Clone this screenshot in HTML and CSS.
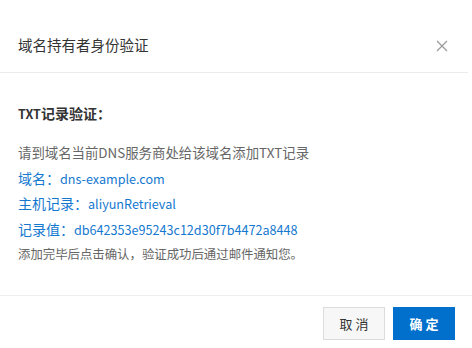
FILE: index.html
```html
<!DOCTYPE html>
<html lang="zh-CN">
<head>
<meta charset="utf-8">
<link rel="stylesheet" href="styles.css">
</head>
<body>
<div class="dialog">
  <div class="header">
    <span class="title">域名持有者身份验证</span>
    <svg class="close" width="12" height="12" viewBox="0 0 12 12"><path d="M1 1L11 11M11 1L1 11" stroke="#999" stroke-width="1.2" fill="none"/></svg>
  </div>
  <div class="body">
    <div class="subtitle"><span class="lat">TXT</span>记录验证<span class="colon">：</span></div>
    <div class="line grey">请到域名当前DNS服务商处给该域名添加TXT记录</div>
    <div class="line blue"><span class="cjk">域名<span class="colon">：</span></span>dns-example.com</div>
    <div class="line blue"><span class="cjk">主机记录<span class="colon">：</span></span>aliyunRetrieval</div>
    <div class="line blue"><span class="cjk">记录值<span class="colon">：</span></span>db642353e95243c12d30f7b4472a8448</div>
    <div class="line note">添加完毕后点击确认<span class="colon">，</span>验证成功后通过邮件通知您。</div>
  </div>
  <div class="footer">
    <button class="btn cancel">取 消</button>
    <button class="btn ok">确 定</button>
  </div>
</div>
</body>
</html>
```
FILE: styles.css
```css
html, body {
  margin: 0;
  padding: 0;
  background: #fff;
}
body {
  font-family: "Noto Sans CJK SC", "Liberation Sans", sans-serif;
  width: 472px;
  height: 348px;
  overflow: hidden;
}
.dialog {
  width: 468px;
}
.header {
  display: flex;
  align-items: center;
  justify-content: space-between;
  padding: 35px 20px 17px 18px;
  border-bottom: 1px solid #e8ecef;
}
.title {
  font-size: 14.5px;
  line-height: 20px;
  color: #333;
}
.close {
  display: block;
  margin-top: 2px;
}
.body {
  padding: 30px 18px 27px 18px;
}
.subtitle {
  font-size: 14px;
  line-height: 20px;
  font-weight: bold;
  color: #333;
  margin-bottom: 16px;
}
.lat {
  font-size: 12.5px;
}
.colon {
  font-family: "Noto Sans CJK TC", sans-serif;
}
.line {
  line-height: 25.5px;
  white-space: nowrap;
}
.grey {
  font-size: 13.4px;
  color: #666;
}
.blue {
  font-size: 12.6px;
  color: #1478cf;
}
.cjk {
  font-size: 14px;
}
.note {
  font-size: 12.4px;
  color: #666;
}
.footer {
  width: 472px;
  display: flex;
  justify-content: flex-end;
  gap: 8px;
  padding: 11px 17px 0 0;
  box-sizing: border-box;
  border-top: 1px solid #efefef;
}
.btn {
  width: 62px;
  height: 33px;
  font-family: inherit;
  font-size: 13px;
  border-radius: 0;
  padding: 0;
  cursor: pointer;
}
.cancel {
  background: #f7f7f7;
  border: 1px solid #dcdcdc;
  color: #333;
}
.ok {
  background: #0070cc;
  border: 1px solid #0070cc;
  color: #fff;
  font-weight: bold;
}
```
